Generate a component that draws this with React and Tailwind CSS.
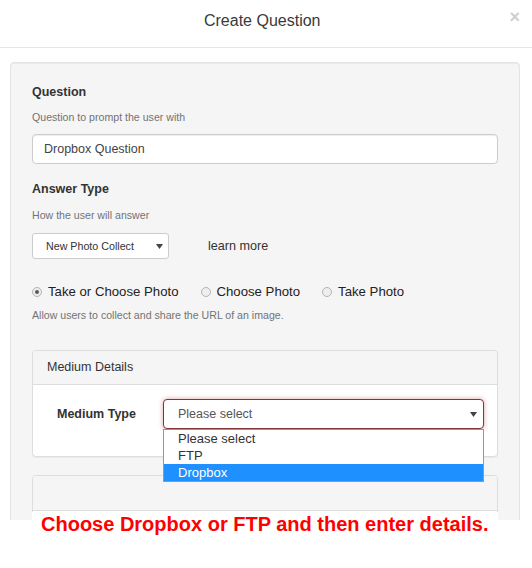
import React from "react";

const FONT = { fontFamily: "'Liberation Sans', Arial, Helvetica, sans-serif" };

function Arrow({ className = "" }) {
  return (
    <svg className={className} width="7" height="5" viewBox="0 0 7 5">
      <polygon points="0,0 7,0 3.5,5" fill="#444" />
    </svg>
  );
}

function Radio({ checked, label, last }) {
  return (
    <div className={`flex items-center ${last ? "" : "mr-[22px]"}`}>
      <span className="w-[10px] h-[10px] rounded-full border border-[#b3b3b3] bg-[#eeeeee] flex items-center justify-center">
        {checked && <span className="w-[4px] h-[4px] rounded-full bg-[#5a5a5a]" />}
      </span>
      <span className="ml-[6px] text-[13.2px] leading-[18px] text-[#222]">{label}</span>
    </div>
  );
}

export default function App() {
  return (
    <div className="relative w-[532px] h-[568px] bg-white" style={FONT}>
      <div className="w-[532px] h-[520px] overflow-hidden bg-white">
        {/* Header */}
        <div className="h-[48px] border-b border-[#e5e5e5] flex items-start pl-[15px] pr-[12px]">
          <div className="flex-1 text-center text-[16px] leading-[22px] pt-[10px] text-[#3a3a3a]">
            Create Question
          </div>
          <div className="pt-[6px] text-[18px] leading-[22px] font-bold text-[#cfcfcf]">×</div>
        </div>

        {/* Body */}
        <div className="pl-[10px] pr-[12px] pt-[14px]">
          <div className="border border-[#e3e3e3] bg-[#f5f5f5] rounded-[4px] px-[21px] pt-[20px] pb-[40px] shadow-[inset_0_1px_1px_rgba(0,0,0,0.05)]">
            <div className="text-[12.5px] leading-[18px] font-bold text-[#333]">Question</div>
            <div className="mt-[9px] text-[10.6px] leading-[14px] text-[#737373]">
              Question to prompt the user with
            </div>
            <div className="mt-[10px] h-[30px] border border-[#cccccc] rounded-[4px] bg-white flex items-center px-[11px] text-[12.5px] text-[#444] shadow-[inset_0_1px_1px_rgba(0,0,0,0.075)]">
              Dropbox Question
            </div>

            <div className="mt-[16px] text-[12.5px] leading-[18px] font-bold text-[#333]">Answer Type</div>
            <div className="mt-[10px] text-[10.6px] leading-[14px] text-[#737373]">
              How the user will answer
            </div>
            <div className="mt-[11px] flex items-center">
              <div className="w-[137px] h-[26px] border border-[#cccccc] rounded-[3px] bg-white flex items-center pl-[13px] pr-[5px] text-[10.7px] text-[#333]">
                <span className="flex-1">New Photo Collect</span>
                <Arrow />
              </div>
              <span className="ml-[39px] text-[12.6px] text-[#333]">learn more</span>
            </div>

            <div className="mt-[24px] flex items-center">
              <Radio checked label="Take or Choose Photo" />
              <Radio label="Choose Photo" />
              <Radio label="Take Photo" last />
            </div>
            <div className="mt-[7px] text-[10.6px] leading-[14px] text-[#737373]">
              Allow users to collect and share the URL of an image.
            </div>

            {/* Medium Details panel */}
            <div className="mt-[28px] border border-[#dddddd] rounded-[4px] bg-white shadow-[0_1px_1px_rgba(0,0,0,0.05)]">
              <div className="h-[34px] bg-[#f5f5f5] border-b border-[#dddddd] rounded-t-[4px] px-[14px] flex items-center text-[12.5px] text-[#333]">
                Medium Details
              </div>
              <div className="pt-[14px] pb-[27px] flex items-center pl-[24px]">
                <div className="w-[106px] text-[12.5px] font-bold text-[#333]">Medium Type</div>
                <div className="relative flex-1 mr-[13px]">
                  <div className="h-[30px] border border-[#843534] rounded-[4px] bg-white flex items-center pl-[14px] pr-[6px] text-[12.5px] text-[#555] shadow-[0_0_5px_#d9a3a2]">
                    <span className="flex-1">Please select</span>
                    <Arrow />
                  </div>
                  <div className="absolute left-0 right-0 top-[30px] border border-[#7a9cd6] bg-white z-10">
                    <div className="h-[17px] leading-[17px] pl-[14px] text-[13px] text-[#333]">Please select</div>
                    <div className="h-[17px] leading-[17px] pl-[14px] text-[13px] text-[#333]">FTP</div>
                    <div className="h-[17px] leading-[17px] pl-[14px] text-[13px] text-white bg-[#1e90ff]">Dropbox</div>
                  </div>
                </div>
              </div>
            </div>

            {/* Second panel */}
            <div className="mt-[18px] border border-[#dddddd] rounded-[4px] bg-white">
              <div className="h-[35px] bg-[#f5f5f5] border-b border-[#dddddd] rounded-t-[4px]" />
              <div className="h-[60px]" />
            </div>
          </div>
        </div>
      </div>

      {/* Annotation */}
      <div className="absolute top-[512px] left-[32px] w-[466px] bg-white pt-[1px] pl-[9px] text-[20px] leading-[23px] font-bold text-[#ff0000] whitespace-nowrap">
        Choose Dropbox or FTP and then enter details.
      </div>
    </div>
  );
}
